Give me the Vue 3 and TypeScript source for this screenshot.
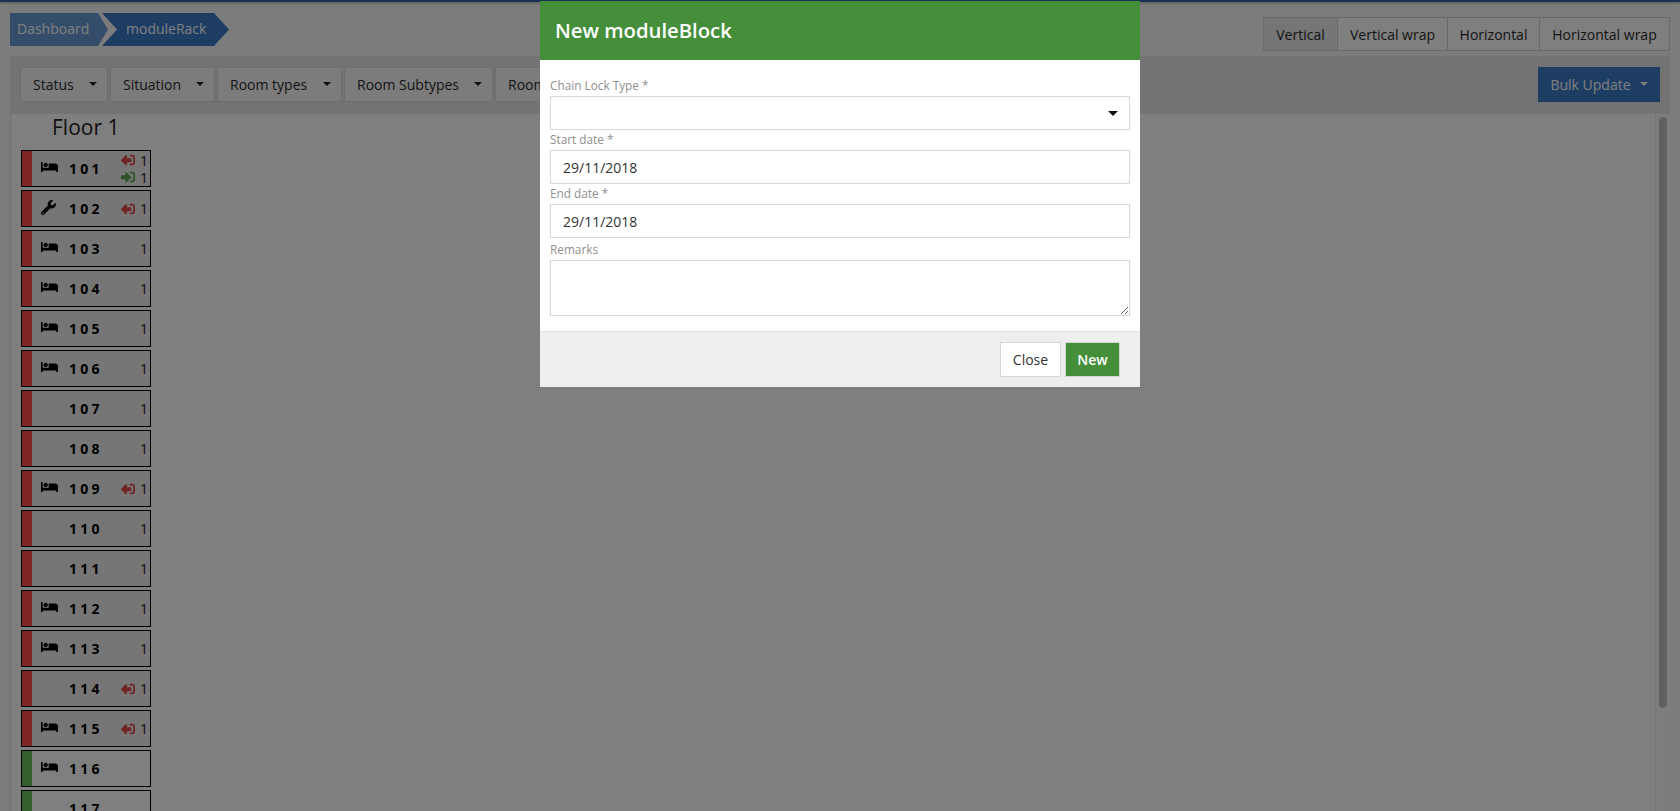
<script setup lang="ts">
interface Room {
  no: number
  icon: '' | 'bed' | 'wrench'
  out: boolean
  inn: boolean
  count: boolean
  free: boolean
}

const mk = (no: number, icon: Room['icon'], out = false, inn = false, count = true, free = false): Room => ({ no, icon, out, inn, count, free })

const rooms: Room[] = [
  mk(101, 'bed', true, true),
  mk(102, 'wrench', true),
  mk(103, 'bed'),
  mk(104, 'bed'),
  mk(105, 'bed'),
  mk(106, 'bed'),
  mk(107, ''),
  mk(108, ''),
  mk(109, 'bed', true),
  mk(110, ''),
  mk(111, ''),
  mk(112, 'bed'),
  mk(113, 'bed'),
  mk(114, '', true),
  mk(115, 'bed', true),
  mk(116, 'bed', false, false, false, true),
  mk(117, '', false, false, false, true),
]

const filters = ['Status', 'Situation', 'Room types', 'Room Subtypes', 'Room Floors']
const layouts = ['Vertical', 'Vertical wrap', 'Horizontal', 'Horizontal wrap']

const bracket = 'M416 448h-84c-6.6 0-12-5.4-12-12v-40c0-6.6 5.4-12 12-12h84c17.7 0 32-14.3 32-32V160c0-17.7-14.3-32-32-32h-84c-6.6 0-12-5.4-12-12V76c0-6.6 5.4-12 12-12h84c53 0 96 43 96 96v192c0 53-43 96-96 96z'
const arrow = 'M369 247L201 79c-15-15-41-4.5-41 17v96H24c-13.3 0-24 10.7-24 24v96c0 13.3 10.7 24 24 24h136v96c0 21.5 26 32 41 17l168-168c9.3-9.4 9.3-24.6 0-34z'
const bed = 'M176 256c44.11 0 80-35.89 80-80s-35.89-80-80-80-80 35.89-80 80 35.89 80 80 80zm352-128H304c-8.84 0-16 7.16-16 16v144H64V80c0-8.84-7.16-16-16-16H16C7.16 64 0 71.16 0 80v352c0 8.84 7.16 16 16 16h32c8.84 0 16-7.16 16-16v-48h512v48c0 8.84 7.16 16 16 16h32c8.84 0 16-7.16 16-16V240c0-61.86-50.14-112-112-112z'
const wrench = 'M507.73 109.1c-2.24-9.03-13.54-12.09-20.12-5.51l-74.36 74.36-67.88-11.31-11.31-67.88 74.36-74.36c6.62-6.62 3.43-17.9-5.66-20.16-47.38-11.74-99.55.91-136.58 37.93-39.64 39.64-50.55 97.1-34.05 147.2L18.74 402.76c-24.99 24.99-24.99 65.51 0 90.5 24.99 24.99 65.51 24.99 90.5 0l213.21-213.21c50.12 16.71 107.47 5.68 147.37-34.22 37.07-37.07 49.7-89.32 37.91-136.73zM64 472c-13.25 0-24-10.75-24-24 0-13.26 10.75-24 24-24s24 10.74 24 24c0 13.25-10.75 24-24 24z'
</script>

<template>
  <div class="page">
    <div class="topline"></div>
    <header class="head">
      <nav class="crumbs">
        <span class="crumb first">Dashboard</span>
        <span class="crumb second">moduleRack</span>
      </nav>
      <div class="layouts">
        <button v-for="(l, i) in layouts" :key="l" class="layout" :class="{ active: i === 0 }">{{ l }}</button>
      </div>
    </header>

    <section class="panel">
      <div class="toolbar">
        <div class="filters">
          <button v-for="f in filters" :key="f" class="filter">{{ f }}<i class="caret"></i></button>
        </div>
        <button class="bulk">Bulk Update<i class="caret light"></i></button>
      </div>
      <div class="content">
        <h3 class="floor">Floor 1</h3>
        <div class="rooms">
          <div v-for="r in rooms" :key="r.no" class="room" :class="{ free: r.free }">
            <span class="bar"></span>
            <span class="ico">
              <svg v-if="r.icon === 'bed'" class="bed" viewBox="0 0 640 512"><path :d="bed" /></svg>
              <svg v-else-if="r.icon === 'wrench'" class="wrench" viewBox="0 0 512 512"><path :d="wrench" /></svg>
            </span>
            <span class="num">{{ r.no }}</span>
            <span class="stats">
              <span v-if="r.out" class="stat">
                <svg class="door red" viewBox="0 0 512 512"><path :d="bracket" /><path :d="arrow" transform="translate(376 0) scale(-1 1)" /></svg>1
              </span>
              <span v-if="r.inn" class="stat">
                <svg class="door green" viewBox="0 0 512 512"><path :d="bracket" /><path :d="arrow" /></svg>1
              </span>
              <span v-if="r.count && !r.out" class="stat">1</span>
            </span>
          </div>
        </div>
        <div class="scrollbar"><div class="thumb"></div></div>
      </div>
    </section>

    <div class="overlay"></div>

    <div class="modal">
      <div class="modal-head">New moduleBlock</div>
      <div class="modal-body">
        <label class="lbl first-lbl">Chain Lock Type *</label>
        <div class="field select"><i class="caret dark"></i></div>
        <label class="lbl">Start date *</label>
        <div class="field">29/11/2018</div>
        <label class="lbl">End date *</label>
        <div class="field">29/11/2018</div>
        <label class="lbl rem">Remarks</label>
        <textarea class="area"></textarea>
      </div>
      <div class="modal-foot">
        <button class="btn close">Close</button>
        <button class="btn new">New</button>
      </div>
    </div>
  </div>
</template>

<style>
html, body { margin: 0; height: 100%; overflow: hidden; }
</style>

<style scoped>
.page {
  height: 811px;
  overflow: hidden;
  background: #f9f9f9;
  font-family: "Open Sans", "Noto Sans", sans-serif;
  font-size: 14px;
  color: #2b2b2b;
  box-sizing: border-box;
  display: flex;
  flex-direction: column;
}
button { font-family: inherit; font-size: 14px; cursor: pointer; }
.topline { height: 2px; background: #2d66a8; box-shadow: 0 1px 3px rgba(0,0,0,.35); flex: none; }
.head {
  display: flex;
  justify-content: space-between;
  align-items: flex-start;
  height: 54px;
  flex: none;
  padding: 11px 10px 0;
  box-sizing: border-box;
}
.crumbs { display: flex; }
.crumb {
  height: 33px;
  line-height: 32px;
  color: #fff;
  font-weight: 500;
  box-sizing: border-box;
}
.crumb.first {
  width: 98px;
  flex: none;
  padding-left: 7px;
  background: #689bd4;
  clip-path: polygon(0 0, 88px 0, 98px 50%, 88px 100%, 0 100%);
}
.crumb.second {
  width: 127px;
  flex: none;
  margin-left: -6px;
  padding-left: 24px;
  background: #3a7ac6;
  clip-path: polygon(0 0, 112px 0, 127px 50%, 112px 100%, 0 100%, 15px 50%);
}
.layouts { display: flex; margin-top: 4px; }
.layout {
  height: 34px;
  padding: 0;
  background: #fff;
  border: 1px solid #d3d3d3;
  margin-left: -1px;
  color: #2b2b2b;
}
.layout:nth-child(1) { width: 75px; }
.layout:nth-child(2) { width: 111px; }
.layout:nth-child(3) { width: 93px; }
.layout:nth-child(4) { width: 131px; }
.layout.active { background: #ececec; }
.panel {
  flex: 1;
  min-height: 0;
  margin: 0 10px 0 10px;
  display: flex;
  flex-direction: column;
  background: #e6e6e6;
}
.toolbar {
  height: 58px;
  flex: none;
  box-sizing: border-box;
  padding: 11px 10px 0;
  display: flex;
  justify-content: space-between;
  align-items: flex-start;
}
.filters { display: flex; gap: 2px; }
.filter {
  height: 35px;
  padding: 0 10px 0 12px;
  background: #f9f9f9;
  border: 1px solid #dcdcdc;
  color: #2b2b2b;
  white-space: nowrap;
  display: flex;
  align-items: center;
  justify-content: space-between;
}
.filter:nth-child(1) { width: 88px; }
.filter:nth-child(2) { width: 105px; }
.filter:nth-child(3) { width: 125px; }
.filter:nth-child(4) { width: 149px; }
.filter:nth-child(5) { width: 140px; }
.caret {
  display: inline-block;
  width: 0;
  height: 0;
  border-left: 4px solid transparent;
  border-right: 4px solid transparent;
  border-top: 4px solid #222;
  margin-bottom: 2px;
}
.caret.light { border-top-color: #fff; margin-left: 9px; }
.caret.dark { border-top-color: #111; border-left-width: 5px; border-right-width: 5px; border-top-width: 5px; margin: 0; }
.bulk {
  height: 35px;
  width: 122px;
  background: #3a7ac6;
  color: #fff;
  border: 0;
  font-weight: 500;
  padding: 0;
  display: flex;
  align-items: center;
  justify-content: center;
}
.content {
  flex: 1;
  min-height: 0;
  background: #ffffff;
  position: relative;
  overflow: hidden;
  margin-left: 1px;
  padding: 0 0 0 10px;
}
.floor {
  margin: 0;
  padding-left: 31px;
  height: 36px;
  font-size: 21px;
  font-weight: 400;
  line-height: 26px;
  color: #222;
}
.rooms { display: flex; flex-direction: column; gap: 3px; width: 130px; }
.room {
  flex: none;
  height: 37px;
  box-sizing: border-box;
  border: 1px solid #000;
  background: #ececec;
  display: flex;
  align-items: center;
}
.room.free { background: #ffffff; }
.bar { width: 10px; align-self: stretch; background: #ff4c4c; flex: none; }
.room.free .bar { background: #66bd5d; }
.ico { width: 17px; margin-left: 9px; flex: none; display: flex; justify-content: center; margin-bottom: 3px; }
.bed { width: 17px; height: 14px; fill: #000; }
.wrench { width: 15px; height: 15px; fill: #111; margin-right: 2px; }
.num {
  margin-left: 11px;
  font-weight: 700;
  font-size: 14px;
  letter-spacing: 3.2px;
  color: #000;
  flex: none;
}
.stats {
  margin-left: auto;
  padding-right: 2px;
  display: flex;
  flex-direction: column;
  align-items: flex-end;
  line-height: 17px;
  color: #222;
}
.stat { display: flex; align-items: center; height: 17px; }
.door { width: 14px; height: 14px; margin-right: 5px; }
.door.red { fill: #e04646; }
.door.green { fill: #5aa852; }
.scrollbar {
  position: absolute;
  top: 0;
  right: 0;
  bottom: 0;
  width: 15px;
  border-left: 1px solid #e8e8e8;
  background: #fafafa;
  box-sizing: border-box;
}
.thumb {
  position: absolute;
  top: 3px;
  left: 3px;
  width: 8px;
  height: 591px;
  border-radius: 4px;
  background: #c2c2c2;
}
.overlay {
  position: fixed;
  inset: 0;
  background: rgba(0, 0, 0, .5);
}
.modal {
  position: fixed;
  top: 1px;
  left: 540px;
  width: 600px;
  background: #fff;
  display: flex;
  flex-direction: column;
}
.modal-head {
  height: 59px;
  box-sizing: border-box;
  background: #458f3b;
  color: #fff;
  font-size: 20.25px;
  font-weight: 600;
  line-height: 59px;
  padding-left: 15px;
}
.modal-body {
  padding: 18px 10px 15px;
  display: flex;
  flex-direction: column;
  height: 271px;
  box-sizing: border-box;
}
.lbl {
  font-size: 11.8px;
  color: #8f8f8f;
  height: 20px;
  line-height: 18px;
  display: block;
}
.first-lbl { height: 18px; line-height: 15px; }
.lbl.rem { height: 22px; line-height: 22px; }
.field {
  height: 34px;
  box-sizing: border-box;
  border: 1px solid #d5d8dc;
  padding: 0 12px;
  line-height: 33px;
  color: #333;
}
.select { display: flex; align-items: center; justify-content: flex-end; padding-right: 11px; }
.area {
  display: block;
  height: 56px;
  width: 100%;
  box-sizing: border-box;
  border: 1px solid #d5d8dc;
  margin: 0;
  padding: 0;
  outline: none;
  background: #fff;
}
.modal-foot {
  height: 56px;
  box-sizing: border-box;
  background: #eeeeee;
  border-top: 1px solid #dedede;
  display: flex;
  justify-content: flex-end;
  align-items: flex-start;
  padding: 10px 20px 0 0;
  gap: 4px;
}
.btn { height: 35px; padding: 0; }
.close { width: 61px; background: #fff; border: 1px solid #d5d8dc; color: #333; }
.new { width: 55px; background: #458f3b; border: 1px solid #cfd8cf; color: #fff; font-weight: 600; }
</style>
